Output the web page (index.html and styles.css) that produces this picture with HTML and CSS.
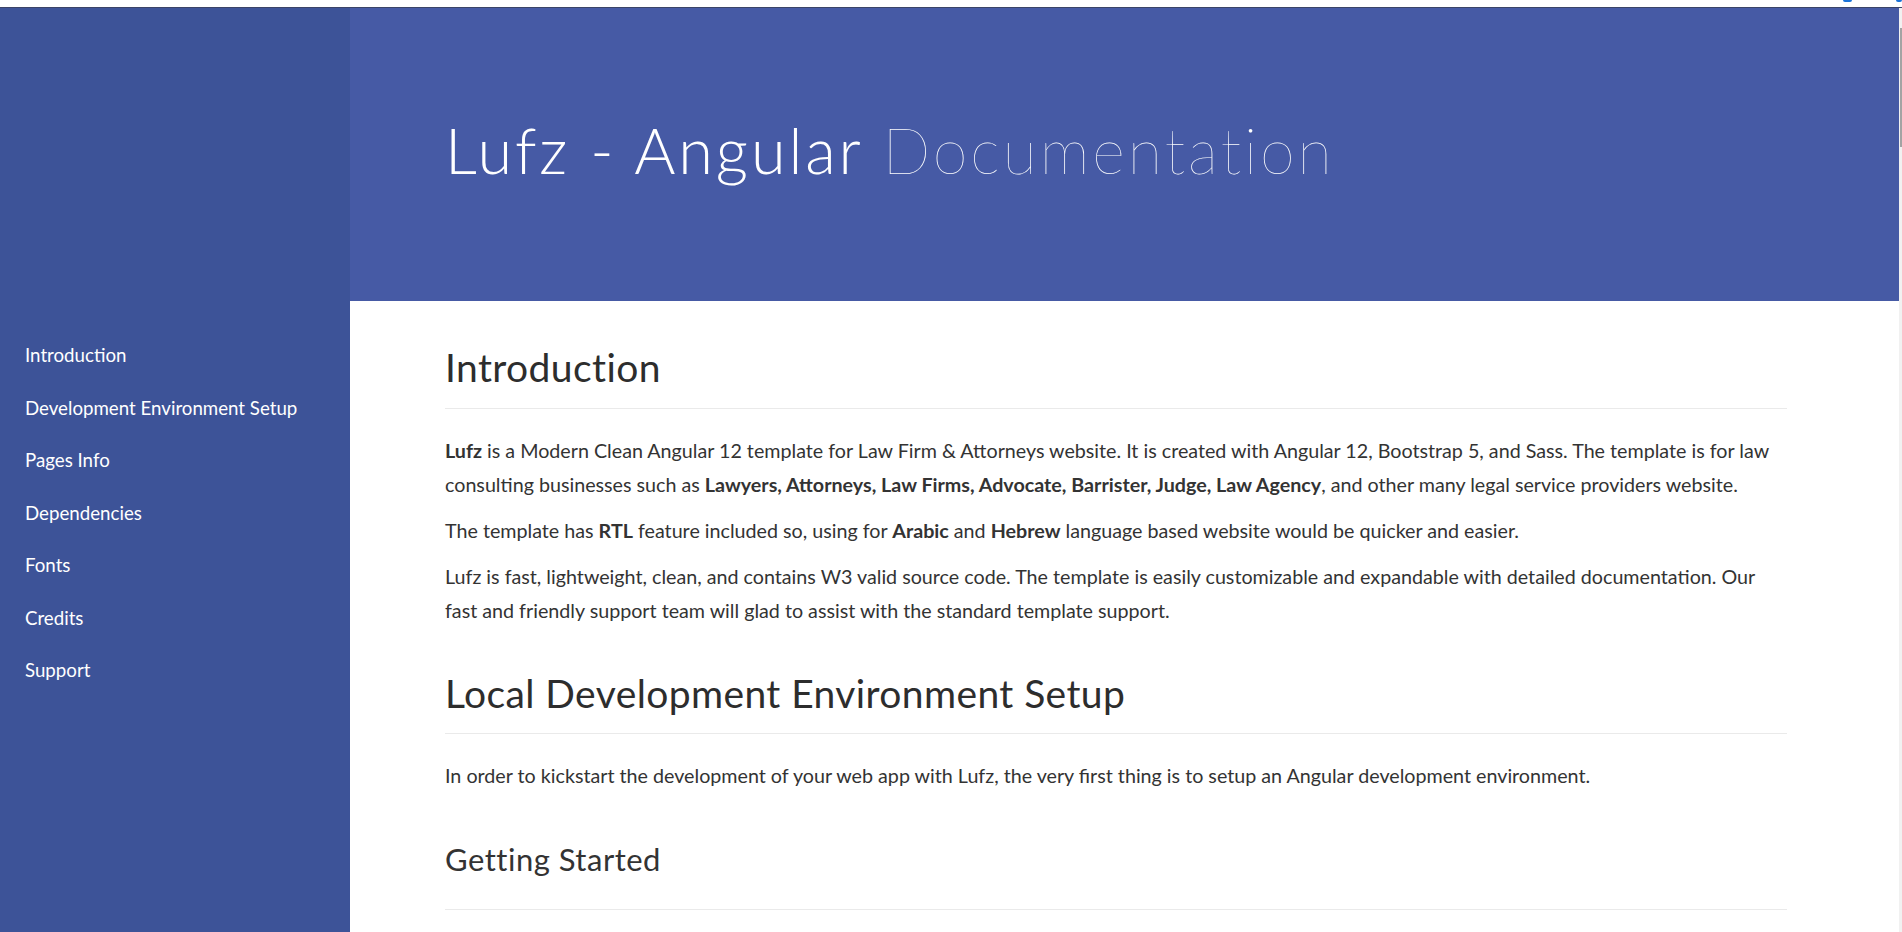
FILE: index.html
```html
<!DOCTYPE html>
<html lang="en">
<head>
<meta charset="utf-8">
<title>Lufz - Angular Documentation</title>
<link rel="stylesheet" href="styles.css">
</head>
<body>
<div class="topbar">
  <span class="tb-mark tb-mark-a"></span>
  <span class="tb-mark tb-mark-b"></span>
</div>
<div class="page">
  <aside class="sidebar">
    <nav>
      <ul class="nav-list">
        <li><a href="#introduction">Introduction</a></li>
        <li><a href="#setup">Development Environment Setup</a></li>
        <li><a href="#pages">Pages Info</a></li>
        <li><a href="#dependencies">Dependencies</a></li>
        <li><a href="#fonts">Fonts</a></li>
        <li><a href="#credits">Credits</a></li>
        <li><a href="#support">Support</a></li>
      </ul>
    </nav>
  </aside>
  <main class="main">
    <header class="hero">
      <h1 class="hero-title">Lufz - Angular <span class="thin">Documentation</span></h1>
    </header>
    <div class="content">
      <section id="introduction">
        <h2 class="sec-title">Introduction</h2>
        <p><b>Lufz</b> is a Modern Clean Angular 12 template for Law Firm &amp; Attorneys website. It is created with Angular 12, Bootstrap 5, and Sass. The template is for law consulting businesses such as <b>Lawyers, Attorneys, Law Firms, Advocate, Barrister, Judge, Law Agency</b>, and other many legal service providers website.</p>
        <p>The template has <b>RTL</b> feature included so, using for <b>Arabic</b> and <b>Hebrew</b> language based website would be quicker and easier.</p>
        <p>Lufz is fast, lightweight, clean, and contains W3 valid source code. The template is easily customizable and expandable with detailed documentation. Our fast and friendly support team will glad to assist with the standard template support.</p>
      </section>
      <section id="setup">
        <h2 class="sec-title">Local Development Environment Setup</h2>
        <p>In order to kickstart the development of your web app with Lufz, the very first thing is to setup an Angular development environment.</p>
        <h3 class="sub-title">Getting Started</h3>
      </section>
    </div>
  </main>
  <div class="scrollbar"><div class="thumb"></div></div>
</div>
</body>
</html>
```

FILE: styles.css
```css
html, body {
  margin: 0;
  padding: 0;
  height: 100%;
  overflow: hidden;
}
body {
  font-family: "Lato", "Liberation Sans", sans-serif;
  color: #333;
  background: #fff;
}
.topbar {
  height: 7px;
  background: #fff;
  border-bottom: 1px solid #3b4468;
  display: flex;
  justify-content: flex-end;
  align-items: flex-start;
}
.tb-mark {
  display: block;
  height: 2px;
  background: #1a73d9;
  border-radius: 0 0 3px 3px;
}
.tb-mark-a { width: 9px; margin-right: 44px; }
.tb-mark-b { width: 6px; }

.page {
  display: flex;
  height: calc(100vh - 8px);
  overflow: hidden;
}
.sidebar {
  width: 350px;
  flex: 0 0 350px;
  background: #3d5398;
  padding-top: 321px;
  box-sizing: border-box;
}
.nav-list {
  list-style: none;
  margin: 0;
  padding: 0;
}
.nav-list a {
  display: block;
  padding: 0 25px;
  font-size: 18.7px;
  line-height: 52.5px;
  color: #fff;
  text-decoration: none;
}
.main {
  flex: 1 1 auto;
  min-width: 0;
}
.hero {
  height: 293px;
  box-sizing: border-box;
  background: #465aa5;
  padding: 104px 0 0 95px;
}
.hero-title {
  margin: 0;
  font-size: 63px;
  line-height: 75px;
  font-weight: 300;
  letter-spacing: 2.9px;
  color: #fff;
}
.hero-title .thin {
  font-weight: 200;
}
.content {
  padding: 44px 0 0 95px;
  max-width: 1342px;
}
.sec-title {
  margin: 42px 0 25px;
  padding-bottom: 17px;
  border-bottom: 1px solid #eaeaea;
  font-size: 39px;
  line-height: 45.6px;
  font-weight: 400;
  letter-spacing: 0.4px;
  color: #2d2d2d;
}
#introduction .sec-title {
  margin-top: 0;
}
.content p {
  margin: 0 0 12px;
  font-size: 19.7px;
  line-height: 34.2px;
}
.content b {
  font-weight: 700;
}
.sub-title {
  margin: 49px 0 0;
  padding-bottom: 32px;
  border-bottom: 1px solid #eaeaea;
  font-size: 31px;
  line-height: 34.8px;
  font-weight: 400;
  letter-spacing: 0.5px;
  color: #333;
}
.scrollbar {
  width: 3px;
  flex: 0 0 3px;
  background: #f1f1f1;
}
.thumb {
  margin: 20px 0 0 1px;
  width: 2px;
  height: 119px;
  background: #a3a3a3;
}
```
